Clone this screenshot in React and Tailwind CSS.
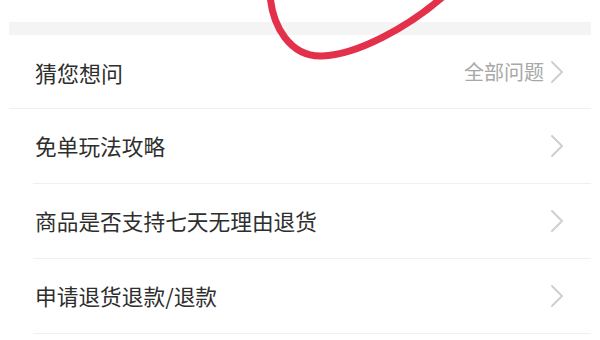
import React from "react";

function Chevron({ color = "#cfcfcf" }) {
  return (
    <svg width="14" height="24" viewBox="0 0 14 24" fill="none">
      <polyline points="2,2 12,12 2,22" stroke={color} strokeWidth="2" strokeLinecap="round" strokeLinejoin="round" />
    </svg>
  );
}

const rows = ["免单玩法攻略", "商品是否支持七天无理由退货", "申请退货退款/退款"];

export default function App() {
  return (
    <div
      className="relative w-[600px] h-[340px] overflow-hidden bg-white"
      style={{ fontFamily: '"Noto Sans CJK SC", "Noto Sans", sans-serif' }}
    >
      <div className="mx-[9px]">
        <div className="h-[22px] bg-white" />
        <div className="h-[13px] bg-[#f4f4f4]" />
        <div className="flex h-[74px] items-center justify-between border-b border-[#f0f0f0] pl-[26px] pr-[27px]">
          <span className="text-[22px] text-[#2e2e2e] leading-none">猜您想问</span>
          <div className="flex items-center gap-[6px]">
            <span className="text-[20px] text-[#a8a8a8] leading-none">全部问题</span>
            <Chevron />
          </div>
        </div>
        {rows.map((t) => (
          <div key={t} className="ml-[24px] flex h-[75px] items-center justify-between border-b border-[#f0f0f0] pl-[2px] pr-[27px]">
            <span className="text-[21.7px] text-[#2e2e2e] leading-none">{t}</span>
            <Chevron />
          </div>
        ))}
      </div>
      <svg className="absolute left-0 top-0" width="600" height="80" viewBox="0 0 600 80" fill="none">
        <path
          d="M270 -6 C272 26, 290 57, 322 56 C356 55, 408 28, 446 -6"
          stroke="#e3304b"
          strokeWidth="7"
          strokeLinecap="round"
        />
      </svg>
    </div>
  );
}
